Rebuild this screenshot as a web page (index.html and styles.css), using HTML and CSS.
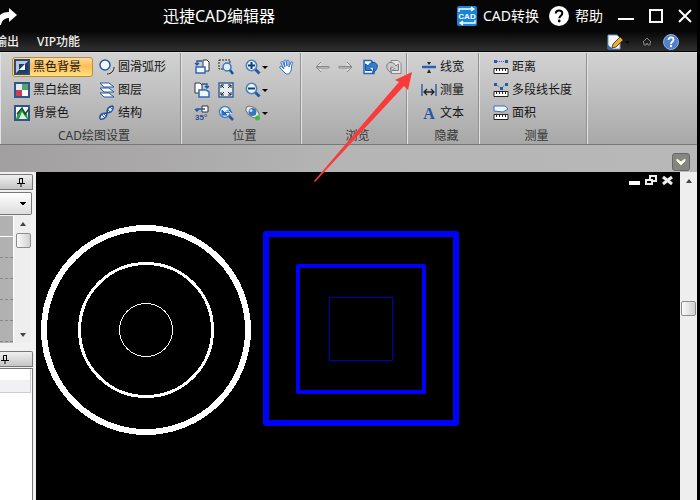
FILE: index.html
```html
<!DOCTYPE html>
<html lang="zh-CN">
<head>
<meta charset="utf-8">
<title>迅捷CAD编辑器</title>
<link rel="stylesheet" href="styles.css">
</head>
<body>
<div class="app">
  <header class="titlebar">
    <button class="plain" aria-label="重做"><svg width="17" height="20" viewBox="0 0 17 20"><path d="M9 2l8 7-8 7v-4C5 12 2 14 1 19H0V9c2-2 5-3 9-3z" fill="#fff"/></svg></button>
    <h1 class="title">迅捷CAD编辑器</h1>
    <button class="plain convert"><svg width="20" height="20" viewBox="0 0 20 20"><rect width="20" height="20" rx="2" fill="#1683df"/><path d="M2 6V3h14M14 1l3 2-3 2M18 14v3H4M6 15l-3 2 3 2" fill="none" stroke="#fff" stroke-width="1.3"/><text x="10" y="13" text-anchor="middle" class="logo-text">CAD</text></svg>CAD转换</button>
    <button class="plain help"><svg width="20" height="20" viewBox="0 0 20 20"><circle cx="10" cy="10" r="10" fill="#fff"/><path d="M6.800 7.500c0-4 6.500-4 6.500-.3 0 2.400-3 2.500-3 5" fill="none" stroke="#000" stroke-width="2"/><circle cx="10.200" cy="15" r="1.400"/></svg>帮助</button>
    <button class="plain window-button" aria-label="最小化"><svg width="16" height="16" viewBox="0 0 16 16"><path d="M0 11h16" stroke="#fff" stroke-width="2"/></svg></button>
    <button class="plain window-button" aria-label="最大化"><svg width="14" height="14" viewBox="0 0 14 14"><path d="M1 1h12v12H1z" fill="none" stroke="#fff" stroke-width="2"/></svg></button>
    <button class="plain window-button" aria-label="关闭"><svg width="14" height="14" viewBox="0 0 14 14"><path d="M1 1l12 12M13 1L1 13" stroke="#fff" stroke-width="2"/></svg></button>
  </header>
  <nav class="menubar">
    <a href="#output">输出</a>
    <a href="#vip">VIP功能</a>
    <span class="menu-tools">
      <button class="plain" aria-label="样式"><svg width="24" height="16" viewBox="0 0 24 16"><path d="M1 1h9l3 3v11H1z" fill="#f4f8ff" stroke="#7895c8"/><path d="M1 11l5 4H1z" fill="#2b6ec4"/><path d="M5 14l1-4 7-7 3 3-7 7z" fill="#e9ae3a" stroke="#64451b"/><path d="M18 7h5l-2.500 3z" fill="#080808"/></svg></button>
      <button class="plain" aria-label="折叠功能区"><svg width="10" height="9" viewBox="0 0 10 9"><path d="M1 5l4-4 4 4-1 1v2H6L5 6 4 8H2V6z" fill="none" stroke="#888"/></svg></button>
      <button class="plain" aria-label="关于"><svg width="16" height="16" viewBox="0 0 16 16"><circle cx="8" cy="8" r="7.500" fill="#5181cb" stroke="#8cb1e6"/><path d="M5.500 6c0-3.500 5-3.200 5-.3 0 2-2.500 2-2.500 4.200" fill="none" stroke="#fff" stroke-width="1.800"/><circle cx="8" cy="12" r="1.200" fill="#fff"/></svg></button>
    </span>
  </nav>

  <div class="ribbon">
    <section class="group settings">
      <div class="tools">
        <div class="column first">
          <button class="tool active"><svg width="16" height="16" viewBox="0 0 16 16"><path d="M1 1h14v14H1z" fill="#fff" stroke="#244c83" stroke-width="2"/><path d="M2 2h12L2 14z" fill="#b9c7d8"/><path d="M14 2v12H2z" fill="#1d3d67"/><path d="M5 5h6l-6 6z" fill="#1d3d67"/><path d="M11 5v6H5z" fill="#fff"/></svg>黑色背景</button>
          <button class="tool"><svg width="16" height="16" viewBox="0 0 16 16"><path d="M1 1h14v14H1z" fill="#fff" stroke="#315589" stroke-width="2"/><path d="M2 2h6v6H2z" fill="#e3ebf5"/><path d="M8 2h6v6H8z" fill="#54a66d"/><path d="M2 8h6v6H2z" fill="#c84050"/></svg>黑白绘图</button>
          <button class="tool"><svg width="16" height="16" viewBox="0 0 16 16"><path d="M1 1h14v14H1z" fill="#f6faf9" stroke="#315589" stroke-width="2"/><path d="M2 14l2-7 4-4 5 6 1 5z" fill="#2f9b42"/><path d="M3 9l5-6 3 6 4-5" fill="none" stroke="#184e37" stroke-width="1.500"/><path d="M5 14l3-7 5 7z" fill="#d9f4d6"/></svg>背景色</button>
        </div>
        <div class="column">
          <button class="tool"><svg width="16" height="16" viewBox="0 0 16 16"><circle cx="6" cy="6" r="5" fill="#f4f9ff" stroke="#255aa5" stroke-width="1.500"/><path d="M15 8c0 4-3 7-7 7" fill="none" stroke="#222"/></svg>圆滑弧形</button>
          <button class="tool"><svg width="16" height="16" viewBox="0 0 16 16"><g fill="#fff" stroke="#2456a5"><path d="M1 11h9l5 4H5z"/><path d="M1 6h9l5 4H5z"/><path d="M1 1h9l5 4H5z"/></g></svg>图层</button>
          <button class="tool"><svg width="16" height="16" viewBox="0 0 16 16"><path d="M1 14c-1-6 5-6 7-6s7-1 6-7M1 14c6 1 7-4 7-6s0-7 6-7" fill="#dcecff" stroke="#244f9b" stroke-width="1.500"/><path d="M3 10l3 3M5 9l2 2M9 5l2 2M11 2l3 3" stroke="#2c67bc"/></svg>结构</button>
        </div>
      </div>
      <h2>CAD绘图设置</h2>
    </section>

    <section class="group position">
      <div class="tools icon-grid">
        <button class="tool" aria-label="向左旋转"><svg width="16" height="16" viewBox="0 0 16 16"><path d="M9 1h4l2 2v9H9z" fill="#fff" stroke="#333"/><path d="M2 8h9v6H2z" fill="#eff6ff" stroke="#2e69b5" stroke-width="1.500"/><path d="M8 2H3v4M1 4l2 2 2-2" fill="none" stroke="#245ba9" stroke-width="1.400"/></svg></button>
        <button class="tool" aria-label="窗口缩放"><svg width="16" height="16" viewBox="0 0 16 16"><path d="M1 1h11v9H1z" fill="none" stroke="#222" stroke-dasharray="2 1"/><circle cx="9" cy="8" r="4" fill="#d9efff" stroke="#3c75b9" stroke-width="1.500"/><path d="M12 11l3 4" stroke="#1e4f98" stroke-width="2.500"/></svg></button>
        <button class="tool" aria-label="放大"><svg width="24" height="16" viewBox="0 0 24 16"><use href="#lens"/><path d="M3 6.500h7M6.500 3v7" stroke="#173b72" stroke-width="2"/><path d="M17 7h6l-3 3z"/></svg></button>
        <button class="tool" aria-label="平移"><svg width="16" height="16" viewBox="0 0 16 16"><path d="M7 15L1 9c-1-2 1-2 2-1l2 2-3-6c0-2 2-2 2 0l2 4-1-6c1-2 2-1 2 0l1 5V2c1-2 2 0 2 0v6l2-5c2-1 2 1 1 2l-1 7-2 3z" fill="#fff" stroke="#2e72c5"/></svg></button>
        <button class="tool" aria-label="向右旋转"><svg width="16" height="16" viewBox="0 0 16 16"><path d="M1 1h5l2 2v8H1z" fill="#fff" stroke="#333"/><path d="M5 8h7l3 2v5H5z" fill="#eff6ff" stroke="#2e69b5" stroke-width="1.500"/><path d="M8 2h5v4M11 4l2 2 2-2" fill="none" stroke="#245ba9" stroke-width="1.400"/></svg></button>
        <button class="tool" aria-label="全部显示"><svg width="16" height="16" viewBox="0 0 16 16"><path d="M1 1h14v14H1z" fill="#e7edf3" stroke="#34639f" stroke-width="1.500"/><path d="M3 6V3h3M10 3h3v3M3 10v3h3M13 10v3h-3M3 3l3 3M13 3l-3 3M3 13l3-3M13 13l-3-3" fill="none" stroke="#222"/></svg></button>
        <button class="tool" aria-label="缩小"><svg width="24" height="16" viewBox="0 0 24 16"><use href="#lens"/><path d="M3 6.500h7" stroke="#173b72" stroke-width="2"/><path d="M17 7h6l-3 3z"/></svg></button>
        <span></span>
        <button class="tool" aria-label="旋转35度"><svg width="16" height="16" viewBox="0 0 16 16"><path d="M8 1h6v6H8z" fill="#fff" stroke="#333"/><path d="M11 4H3v2M1 4l2 2 2-2" fill="none" stroke="#245ba9" stroke-width="1.500"/><text x="1" y="15" class="degree">35°</text></svg></button>
        <button class="tool" aria-label="上一视图"><svg width="16" height="16" viewBox="0 0 16 16"><circle cx="7" cy="7" r="5.500" fill="#e8f6ff" stroke="#4b83c3" stroke-width="1.500"/><path d="M4 5v5h5zM7 8c2-4 6-3 7 0" fill="#2b72c7" stroke="#2464b3"/><path d="M8 7c2-2 4-1 5 2" fill="none" stroke="#fff"/><path d="M11 11l4 4" stroke="#24569c" stroke-width="2.500"/></svg></button>
        <button class="tool" aria-label="动态视图"><svg width="24" height="16" viewBox="0 0 24 16"><ellipse cx="7.500" cy="7" rx="7.500" ry="4.500" transform="rotate(38 7.500 7)" fill="#e8ecef" stroke="#777"/><circle cx="7.500" cy="7" r="4" fill="#3976b8"/><circle cx="6" cy="5.500" r="1.500" fill="#bce4ff"/><circle cx="12.500" cy="13" r="2.500" fill="#35bd42"/><path d="M17 7h6l-3 3z"/></svg></button>
      </div>
      <h2>位置</h2>
    </section>

    <section class="group browse">
      <div class="tools row-tools">
        <button class="tool" aria-label="后退"><svg width="16" height="16" viewBox="0 0 16 16"><path d="M7 3L2 8l5 5M2 7.500h13v1.500H3" fill="#ddd" stroke="#888"/></svg></button>
        <button class="tool" aria-label="前进"><svg width="16" height="16" viewBox="0 0 16 16"><path d="M9 3l5 5-5 5M14 7.500H1v1.500h12" fill="#ddd" stroke="#888"/></svg></button>
        <button class="tool" aria-label="撤销视图"><svg width="16" height="16" viewBox="0 0 16 16"><path d="M2 1.500h7l3 3v10H2z" fill="#f5faff" stroke="#2766b5" stroke-width="1.500"/><path d="M3.500 5v6.500H10L8 9.500c2.500-3 5-1 2.500 4C16 12 17 4 12 3.500 9 3 7 5 6 7z" fill="#2f7fd0" stroke="#174f92"/></svg></button>
        <button class="tool" aria-label="重做视图"><svg width="16" height="16" viewBox="0 0 16 16"><path d="M5 1.500h7l3 3v10H5z" fill="#e6e6e6" stroke="#888"/><path d="M12.500 5v6.500H6L8 9.500c-2.500-3-5-1-2.500 4C0 12-1 4 4 3.500 7 3 9 5 10 7z" fill="#ccc" stroke="#7c7c7c"/></svg></button>
      </div>
      <h2>浏览</h2>
    </section>

    <section class="group hidden-lines">
      <div class="tools"><div class="column">
        <button class="tool"><svg width="16" height="16" viewBox="0 0 16 16"><path d="M1 8h14" stroke="#2863b7" stroke-width="2.500"/><path d="M6 3h4L8 6zM6 14h4l-2-4z" fill="#222"/></svg>线宽</button>
        <button class="tool"><svg width="16" height="16" viewBox="0 0 16 16"><path d="M1 2v12M15 2v12" stroke="#2863b7" stroke-width="1.500"/><path d="M3 10h10M6 7l-3 3 3 3M10 7l3 3-3 3" fill="none" stroke="#222" stroke-width="1.300"/></svg>测量</button>
        <button class="tool"><svg width="16" height="16" viewBox="0 0 16 16"><text x="8" y="14" text-anchor="middle" class="letter-icon">A</text></svg>文本</button>
      </div></div>
      <h2>隐藏</h2>
    </section>

    <section class="group measure">
      <div class="tools"><div class="column">
        <button class="tool"><svg width="16" height="16" viewBox="0 0 16 16"><use href="#ruler"/><path d="M2 2.500h12" stroke="#2a65b2" stroke-dasharray="1 1"/><path d="M1 1h3v3H1zM12 1h3v3h-3z" fill="#2459ad"/></svg>距离</button>
        <button class="tool"><svg width="16" height="16" viewBox="0 0 16 16"><use href="#ruler"/><path d="M2 2l6 4 6-4" fill="none" stroke="#2a65b2" stroke-dasharray="1 1"/><path d="M1 1h3v3H1zM7 5h3v3H7zM12 1h3v3h-3z" fill="#2459ad"/></svg>多段线长度</button>
        <button class="tool"><svg width="16" height="16" viewBox="0 0 16 16"><use href="#ruler"/><path d="M1 1h11l3 3-5 3-9-1z" fill="#edf6ff" stroke="#3d73b9"/></svg>面积</button>
      </div></div>
      <h2>测量</h2>
    </section>
    <div class="group rest"></div>
  </div>

  <div class="tabstrip"><button class="drop" aria-label="展开"><svg width="10" height="8" viewBox="0 0 10 8"><path d="M1 1l4 3 4-3v2L5 7 1 3z" fill="#fff" stroke="#f4f5d8"/></svg></button></div>

  <main class="workspace">
    <aside class="sidebar">
      <div class="panel-head"><button class="plain" aria-label="固定属性"><svg width="8" height="10" viewBox="0 0 8 10"><use href="#pin"/></svg></button></div>
      <select class="picker" aria-label="对象"><option></option></select>
      <div class="list">
        <div class="rows"><span class="row top"></span><span class="row"></span><span class="row"></span><span class="row"></span><span class="row"></span><span class="row"></span></div>
        <div class="scroll">
          <svg width="6" height="4" viewBox="0 0 6 4"><path d="M3 0l3 4H0z" fill="#444"/></svg>
          <span class="thumb"></span>
          <svg class="down" width="6" height="4" viewBox="0 0 6 4"><path d="M3 4l3-4H0z" fill="#444"/></svg>
        </div>
      </div>
      <div class="panel-head second"><button class="plain" aria-label="固定命令"><svg width="8" height="10" viewBox="0 0 8 10"><use href="#pin"/></svg></button></div>
      <div class="blank"><div class="field"></div></div>
    </aside>
    <div class="canvas">
      <svg class="drawing" width="440" height="270" viewBox="36 172 440 270">
        <g fill="none" stroke="#fff" shape-rendering="crispEdges">
          <circle cx="146" cy="330" r="102" stroke-width="6"/>
          <circle cx="146" cy="330" r="66.500" stroke-width="3"/>
          <circle cx="146" cy="330" r="26.500" stroke-width="1"/>
        </g>
        <g fill="none" stroke="#00f" stroke-linejoin="round">
          <path d="M266 234h190v189H266z" stroke-width="6"/>
          <path d="M298 266h126v126H298z" stroke-width="4"/>
          <path d="M329.500 297.500h63v63h-63z" stroke="#0000b8"/>
        </g>
      </svg>
      <div class="doc-buttons">
        <button class="plain" aria-label="最小化图纸"><svg width="11" height="11" viewBox="0 0 11 11"><path d="M0 6h11v4H0z" fill="#fff"/></svg></button>
        <button class="plain" aria-label="还原图纸"><svg width="12" height="11" viewBox="0 0 12 11"><path d="M5 4V1h6v5H8M1 5h6v4H1z" fill="none" stroke="#eee" stroke-width="2"/></svg></button>
        <button class="plain" aria-label="关闭图纸"><svg width="11" height="11" viewBox="0 0 11 11"><path d="M1 2l9 7M10 2L1 9" stroke="#eee" stroke-width="3"/></svg></button>
      </div>
    </div>
    <div class="canvas-scroll">
      <svg width="6" height="4" viewBox="0 0 6 4"><path d="M3 0l3 4H0z" fill="#444"/></svg>
      <span class="thumb"></span>
    </div>
  </main>

  <svg class="pointer" width="100" height="112" viewBox="314 70 100 112"><path d="M412 72l-17 8 4 2-85 99 1 1 89-96 4 4z" fill="#f93b3a"/></svg>
</div>

<svg class="defs" aria-hidden="true">
  <symbol id="lens" viewBox="0 0 16 16" width="16" height="16"><circle cx="6.500" cy="6.500" r="5.200" fill="#eaf6ff" stroke="#4e82bd" stroke-width="1.600"/><path d="M10.500 10.500l4 4" stroke="#245ba5" stroke-width="3"/></symbol>
  <symbol id="ruler" viewBox="0 0 16 16" width="16" height="16"><path d="M1 9.500h14v5H1z" fill="#fff" stroke="#222"/><path d="M3.500 10v2M6.500 10v2M9.500 10v2M12.500 10v2" stroke="#222"/></symbol>
  <symbol id="pin" viewBox="0 0 8 10" width="8" height="10"><path d="M2.500 6V1.500h3V6M0 6.500h8M4 7v3" fill="none" stroke="#000"/><path d="M5 1h1v5H5z"/></symbol>
</svg>
</body>
</html>
```
FILE: styles.css
```css
* { box-sizing: border-box; }
body { margin: 0; background: #000; font-family: "Noto Sans", "Noto Sans CJK SC", sans-serif; font-size: 12px; }
button { font: inherit; color: inherit; padding: 0; border: 0; background: none; }
svg { display: block; flex: none; }
.defs { position: absolute; width: 0; height: 0; }
.app { position: relative; min-height: 100vh; display: flex; flex-direction: column; padding-right: 3px; }
.plain { display: flex; align-items: center; }

.titlebar { height: 32px; display: flex; align-items: center; background: #060606; color: #fff; gap: 14px; }
.title { flex: 1; margin: 0; padding-left: 132px; font-size: 16px; line-height: 24px; font-weight: 400; white-space: nowrap; }
.convert, .help { font-size: 14px; gap: 6px; line-height: 20px; white-space: nowrap; }
.help { margin-left: -4px; }
.window-button { margin-left: 1px; }
.window-button:last-child { margin-right: 5px; }
.logo-text { font: bold 8px "Liberation Sans", sans-serif; fill: #fff; }

.menubar { height: 20px; display: flex; align-items: center; gap: 18px; background: linear-gradient(#080808, #303030); border-bottom: 1px solid #000; color: #eee; line-height: 16px; }
.menubar a { color: inherit; text-decoration: none; white-space: nowrap; font-weight: 500; }
.menubar a:first-child { margin-left: -5px; }
.menu-tools { margin-left: auto; display: flex; align-items: center; gap: 11px; padding-right: 18px; }

.ribbon { display: flex; height: 93px; border-bottom: 1px solid #777; border-top: 1px solid #ddd; background: linear-gradient(#d2d2d2, #c2c2c2 40%, #a8a8a8); color: #151515; }
.group { display: flex; flex-direction: column; justify-content: space-between; border-right: 1px solid #929292; box-shadow: inset 1px 0 #e2e2e2; padding: 4px 0 0 12px; }
.group h2 { margin: 0 0 0 -12px; padding-left: 8px; font-size: 12px; line-height: 16px; font-weight: 400; text-align: center; color: #363636; }
.settings { flex: 0 0 181px; }
.position { flex: 0 0 120px; }
.browse { flex: 0 0 106px; }
.hidden-lines { flex: 0 0 72px; }
.measure { flex: 0 0 108px; }
.rest { flex: 1; border: 0; }
.tools { display: flex; gap: 4px; }
.column { display: flex; flex-direction: column; gap: 3px; }
.first { width: 81px; }
.tool { display: flex; align-items: center; gap: 3px; height: 20px; line-height: 18px; white-space: nowrap; padding: 0 1px; border: 1px solid transparent; border-radius: 3px; }
.active { background: linear-gradient(#fbdc9b, #fdbe55 45%, #ffe37c); border-color: #c08b3a; }
.icon-grid { display: grid; grid-template-columns: 20px 23px 30px 20px; gap: 3px 4px; margin-left: -1px; }
.row-tools { gap: 4px; margin-left: -1px; }
.row-tools .tool { width: 20px; }
.degree { font: bold 8px "Liberation Sans", sans-serif; fill: #284f94; }
.letter-icon { font: bold 16px "Liberation Serif", serif; fill: #2455a4; }

.tabstrip { height: 27px; display: flex; align-items: center; justify-content: flex-end; padding: 6px 7px 0 0; background: linear-gradient(90deg, #a29fa0, #b5b5b5 50%, #b8b8b8); }
.drop { width: 18px; height: 18px; display: grid; place-items: center; background: #85877f; border: 1px solid #666; border-radius: 3px; }

.workspace { flex: 1; display: flex; }
.sidebar { flex: 0 0 36px; display: flex; flex-direction: column; background: #f1f1f1; padding-top: 2px; }
.panel-head { height: 16px; width: 33px; display: flex; align-items: center; justify-content: flex-end; padding-right: 7px; border: 1px solid #777; border-left: 0; border-radius: 0 2px 0 0; background: linear-gradient(#f0f0f0, #c5c5c5); }
.second { margin-top: 8px; padding-right: 23px; }
.picker { appearance: none; width: 32px; height: 23px; margin: 2px 0 1px; border: 1px solid #777; border-left: 0; border-radius: 0 2px 2px 0; background: linear-gradient(45deg, transparent 50%, #000 50%) 19px 9px / 4px 4px no-repeat, linear-gradient(-45deg, transparent 50%, #000 50%) 23px 9px / 4px 4px no-repeat, linear-gradient(#fff, #ddd); }
.list { height: 127px; display: flex; width: 31px; }
.rows { width: 14px; background: #b1b1b1; border-right: 1px solid #fff; }
.row { display: block; height: 21px; border-bottom: 1px dashed #888; }
.row.top { border-bottom: 1px solid #fff; }
.scroll { flex: 1; display: flex; flex-direction: column; align-items: center; padding: 6px 0; background: #eee; margin-left: 1px; }
.scroll .down { margin-top: auto; }
.thumb { width: 15px; height: 15px; margin-top: 7px; border: 1px solid #8c8c8c; border-radius: 2px; background: linear-gradient(90deg, #fafafa, #d1d1d1); }
.blank { flex: 1; width: 33px; margin-top: 1px; border: 1px solid #777; border-width: 1px 1px 0 0; background: #fff; }
.field { height: 24px; margin-right: 1px; border: 1px solid #ccc; border-width: 0 1px 1px 0; background: linear-gradient(#fff 45%, #f1f1f3 50%); }
.canvas { flex: 1; position: relative; min-width: 0; background: #000; }
.drawing { max-width: 100%; }
.doc-buttons { position: absolute; top: 3px; right: 7px; display: flex; gap: 5px; }
.canvas-scroll { flex: 0 0 17px; display: flex; flex-direction: column; align-items: center; padding-top: 7px; background: #eee; }
.canvas-scroll .thumb { margin-top: 118px; }
.pointer { position: absolute; left: 314px; top: 70px; }
```
